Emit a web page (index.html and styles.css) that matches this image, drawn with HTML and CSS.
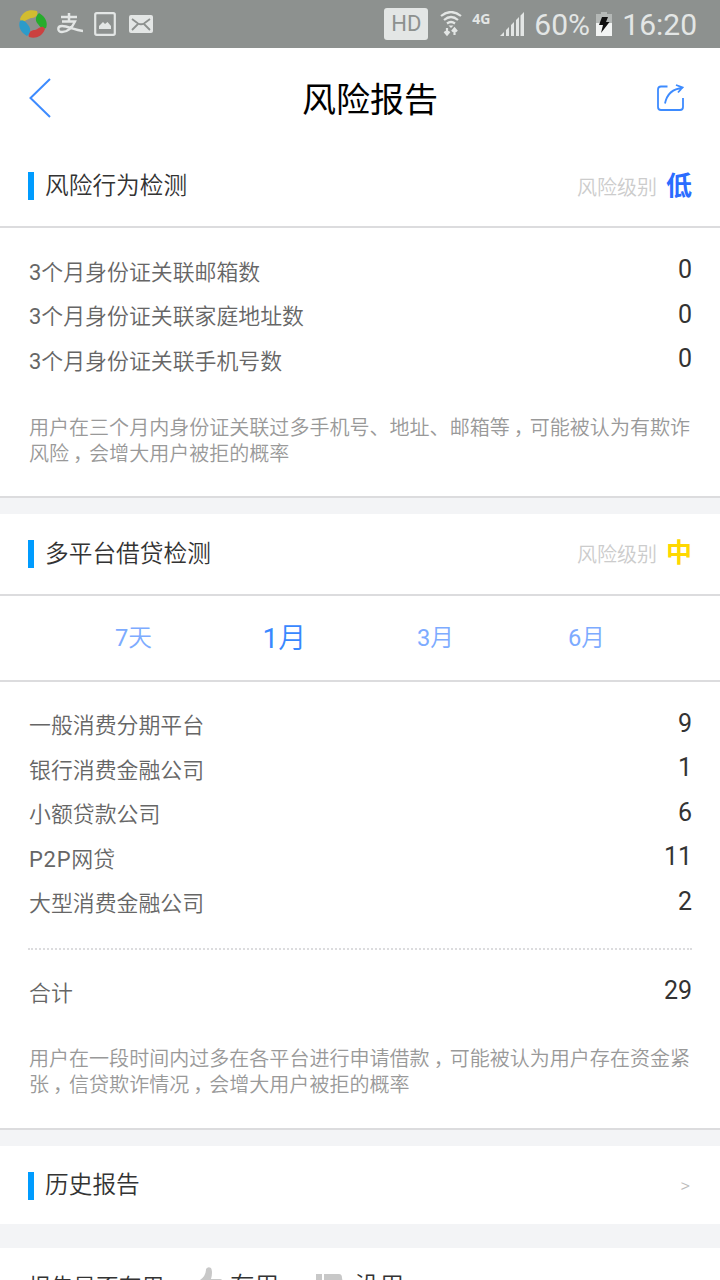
FILE: index.html
```html
<!DOCTYPE html>
<html lang="zh-CN">
<head>
    <meta charset="UTF-8">
    <meta name="viewport" content="width=device-width, initial-scale=1.0">
    <title>风险报告</title>
    <link rel="stylesheet" href="styles.css">
</head>
<body>
    <div class="status-bar">
        <div class="status-left">
            <svg class="ic-ball" width="28" height="28" viewBox="0 0 28 28">
                <path d="M1 9C4 0 12-1 18 1C20 6 15 8 12 8C8 9 5 13 2 11Z" fill="#d2bc30"/>
                <path d="M20 3C27 7 29 13 27 18C24 20 21 17 19 14C16 11 16 7 20 3Z" fill="#26ac2c"/>
                <path d="M26 19C23 27 16 29 10 27C8 22 13 20 16 20C20 19 23 14 26 19Z" fill="#cb4140"/>
                <path d="M8 26C1 22-1 16 1 11C4 9 7 12 9 15C12 18 12 23 8 26Z" fill="#2c9bca"/>
            </svg>
            <svg class="ic-pay" width="26" height="22" viewBox="0 0 26 22" fill="none" stroke="#e3e6e5">
                <path d="M4 4H20M12 0V8" stroke-width="2.500"/>
                <path d="M5 8.500H18C15 15 10 19 5 19C0 19 0 13 5 13C11 13 17 17 26 18" stroke-width="2.300"/>
            </svg>
            <svg class="ic-photo" width="22" height="24" viewBox="0 0 22 24">
                <rect x="1.200" y="1.200" width="19.600" height="21.600" rx="1.500" fill="none" stroke="#e3e6e5" stroke-width="2.200"/>
                <path d="M5 17V14L9 10L11 12L13.500 10L17 14V17Z" fill="#e3e6e5"/>
            </svg>
            <svg class="ic-mail" width="24" height="18" viewBox="0 0 24 18">
                <rect width="24" height="18" rx="2" fill="#e3e6e5"/>
                <path d="M3 4L9 8.500Q12 10 15 8.500L21 4M3 15L9 9M21 15L15 9" fill="none" stroke="#8d918f" stroke-width="1.800"/>
            </svg>
        </div>
        <div class="status-right">
            <span class="hd">HD</span>
            <svg class="ic-wifi" width="22" height="26" viewBox="0 0 22 26" fill="none" stroke="#e3e6e5" stroke-width="2.200">
                <path d="M1 5Q11-3 21 5M4 9Q11 3 18 9M7 12.500Q11 9.500 15 12.500"/>
                <path d="M8.500 14.500H13.500L11 17Z" fill="#e3e6e5" stroke="none"/>
                <path d="M7 17V23M4.500 20.500L7 23.500L9.500 20.500M14.500 24V18M12 20.500L14.500 17.500L17 20.500"/>
            </svg>
            <span class="net">4G</span>
            <svg class="ic-signal" width="24" height="25" viewBox="0 0 24 25" fill="#e3e6e5">
                <path d="M0 24L4 20V24ZM6 18L9 15V24H6ZM11 13L14 10V24H11ZM16 8L19 5V24H16ZM20.500 3.500L24 0V24H20.500Z"/>
            </svg>
            <span class="percent">60%</span>
            <svg class="ic-battery" width="16" height="24" viewBox="0 0 16 24">
                <path d="M0 2H5V0H11V2H16V11H0Z" fill="#b4b8b6"/>
                <path d="M0 11H16V24H0Z" fill="#f2f4f3"/>
                <path d="M6 5H12L10 10H13.500L5 21L7 13H3Z" fill="#111"/>
            </svg>
            <span class="clock">16:20</span>
        </div>
    </div>

    <div class="header">
        <svg width="24" height="40" viewBox="0 0 24 40" fill="none" stroke="#3d8bff" stroke-width="2">
            <path d="M22 1L2.500 20L22 39"/>
        </svg>
        <h1>风险报告</h1>
        <svg width="28" height="28" viewBox="0 0 28 28" fill="none" stroke="#3d8bff" stroke-width="1.800">
            <path d="M11.500 2.500H5Q2 2.500 2 5.500V23Q2 26 5 26H24Q27 26 27 23V14"/>
            <path d="M9 19.500Q12 5 26.500 4M20 1L26.500 3.500L22 8.500"/>
        </svg>
    </div>

    <div class="section">
        <div class="section-head">
            <h2>风险行为检测</h2>
            <div class="level">风险级别<b class="low">低</b></div>
        </div>
        <ul class="list">
            <li><span><span class="latin">3</span>个月身份证关联邮箱数</span><em>0</em></li>
            <li><span><span class="latin">3</span>个月身份证关联家庭地址数</span><em>0</em></li>
            <li><span><span class="latin">3</span>个月身份证关联手机号数</span><em>0</em></li>
        </ul>
        <p class="desc desc-first">用户在三个月内身份证关联过多手机号、地址、邮箱等<i>，</i>可能被认为有欺诈<br>风险<i>，</i>会增大用户被拒的概率</p>
    </div>

    <div class="section">
        <div class="section-head">
            <h2>多平台借贷检测</h2>
            <div class="level">风险级别<b class="mid">中</b></div>
        </div>
        <div class="tabs">
            <div><span class="latin">7</span>天</div>
            <div class="active"><span class="latin">1</span>月</div>
            <div><span class="latin">3</span>月</div>
            <div><span class="latin">6</span>月</div>
        </div>
        <ul class="list">
            <li><span>一般消费分期平台</span><em>9</em></li>
            <li><span>银行消费金融公司</span><em>1</em></li>
            <li><span>小额贷款公司</span><em>6</em></li>
            <li><span><span class="latin p2p">P2P</span>网贷</span><em>11</em></li>
            <li><span>大型消费金融公司</span><em>2</em></li>
        </ul>
        <div class="total"><span>合计</span><em>29</em></div>
        <p class="desc">用户在一段时间内过多在各平台进行申请借款<i>，</i>可能被认为用户存在资金紧<br>张<i>，</i>信贷欺诈情况<i>，</i>会增大用户被拒的概率</p>
    </div>

    <div class="history">
        <h2>历史报告</h2>
        <span class="arrow">&gt;</span>
    </div>

    <div class="feedback">
        <span class="question">报告是否有用</span>
        <svg class="thumb-up" width="26" height="28" viewBox="0 0 26 28" fill="#c8c8c8">
            <path d="M0 14H5V28H0ZM3 13Q9 9 9 2Q11-1 14 1Q16 5 14 12H23Q26 12 25 16L22 28H3Z"/>
        </svg>
        <span class="answer">有用</span>
        <svg class="thumb-down" width="28" height="28" viewBox="0 0 28 28" fill="#c8c8c8">
            <path d="M0 0H6V14H0ZM8 0H23Q26 0 26 4L28 15H17Q20 24 17 28Q14 28 14 23L8 14Z"/>
        </svg>
        <span class="answer">没用</span>
    </div>
</body>
</html>
```
FILE: styles.css
```css
* {
    box-sizing: border-box;
}
body {
    margin: 0;
    height: 1280px;
    overflow: hidden;
    background-color: #f3f4f6;
    color: #333;
    font-family: Roboto, "Noto Sans CJK SC", sans-serif;
    font-weight: 350;
}
h1, h2, p, ul {
    margin: 0;
    padding: 0;
    font-weight: 350;
}
em, i {
    font-style: normal;
}
svg {
    display: block;
    flex: none;
}

/* status bar */
.status-bar {
    display: flex;
    justify-content: space-between;
    height: 48px;
    padding: 0 23px 0 19px;
    background-color: #8d918f;
    color: #e3e6e5;
    font-weight: 400;
}
.status-left, .status-right {
    display: flex;
    align-items: center;
}
.ic-pay {
    margin-left: 10px;
}
.ic-photo {
    margin-left: 11px;
}
.ic-mail {
    margin-left: 13px;
}
.hd {
    width: 44px;
    height: 32px;
    border-radius: 3px;
    background-color: #e3e6e5;
    color: #8d918f;
    font-size: 22px;
    line-height: 32px;
    text-align: center;
}
.ic-wifi {
    margin-left: 12px;
}
.net {
    margin: -12px 0 0 10px;
    width: 20px;
    font: bold 14px "Noto Sans", sans-serif;
}
.ic-signal {
    margin-left: 8px;
}
.percent {
    margin-left: 10px;
    width: 56px;
    font-size: 30px;
}
.ic-battery {
    margin-left: 6px;
}
.clock {
    margin-left: 10px;
    font-size: 30px;
}

/* title */
.header {
    display: flex;
    align-items: center;
    justify-content: space-between;
    height: 98px;
    padding: 2px 36px 0 28px;
    background-color: #fff;
}
.header h1 {
    margin: -1px 0 0 32px;
    color: #000;
    font-size: 34px;
    font-weight: 400;
}

/* sections */
.section {
    margin-bottom: 16px;
    border-bottom: 2px solid #dcdcde;
    background-color: #fff;
}
.section-head {
    display: flex;
    align-items: center;
    justify-content: space-between;
    height: 82px;
    padding: 0 28px;
    border-bottom: 2px solid #dcdcde;
}
h2 {
    height: 28px;
    padding-left: 11px;
    border-left: 6px solid #009cff;
    font-size: 23.7px;
    line-height: 28px;
}
.level {
    display: flex;
    align-items: center;
    color: #ccc;
    font-size: 20px;
}
.level b {
    margin: -6px 0 0 9px;
    font-size: 26px;
    font-weight: 700;
}
.low {
    color: #2b6cff;
}
.mid {
    color: #ffd800;
}
.list {
    padding: 20px 28px 24px;
    list-style: none;
}
.list li, .total {
    display: flex;
    align-items: center;
    justify-content: space-between;
    height: 44.5px;
    padding-left: 1px;
    color: #666;
    font-size: 21.9px;
}
.list em, .total em {
    margin-top: -1px;
    color: #333;
    font-size: 25px;
    font-weight: 400;
}
.latin {
    font-weight: 400;
}
.p2p {
    letter-spacing: 0.8px;
}
.total {
    height: 84px;
    margin: 0 28px;
    border-top: 2px dotted #dcdcde;
}
.desc {
    height: 96px;
    margin: 0 28px;
    padding: 14px 0 0 1px;
    color: #999;
    font-size: 20.05px;
    line-height: 26px;
    white-space: nowrap;
}
.desc-first {
    height: 90px;
    padding-top: 9px;
}
/* half-width comma, centred in its cell */
.desc i {
    padding: 0 0.3em 0 0.2em;
    font-feature-settings: "halt";
}

.tabs {
    display: grid;
    grid-template-columns: repeat(4, 1fr);
    align-items: center;
    height: 86px;
    padding: 0 58px 4px;
    border-bottom: 2px solid #dcdcde;
    color: #7dabff;
    font-size: 23.7px;
    text-align: center;
}
.tabs .active {
    color: #3888ff;
    font-size: 28px;
}

.history {
    display: flex;
    align-items: center;
    justify-content: space-between;
    height: 78px;
    padding: 1px 30px 0 28px;
    background-color: #fff;
}
.history h2 {
    line-height: 26px;
}
.arrow {
    color: #bbb;
    font-size: 19px;
}

.feedback {
    display: flex;
    align-items: flex-start;
    height: 78px;
    margin-top: 24px;
    padding: 19px 28px 0;
    background-color: #fff;
}
.question {
    margin-top: 2px;
    width: 169px;
    font-size: 22.7px;
}
.answer {
    margin-left: 7px;
    width: 50px;
    font-size: 24.5px;
    white-space: nowrap;
}
.thumb-down {
    margin: 7px 4px 0 36px;
}
```
